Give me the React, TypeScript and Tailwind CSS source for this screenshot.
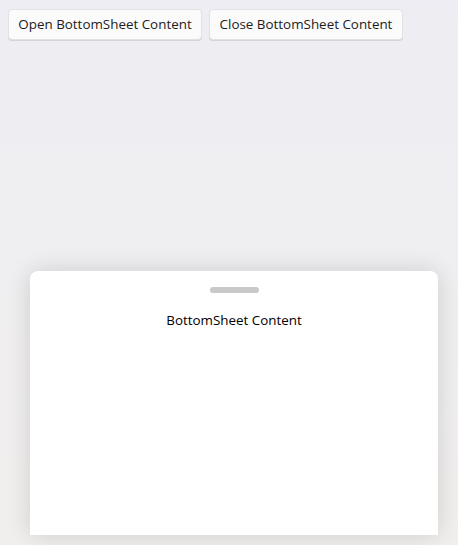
export default function App() {
  return (
    <div
      className="flex h-[545px] flex-col bg-gradient-to-b from-[#eeedf3] to-[#f1efed] text-[#1b1b1b]"
      style={{ fontFamily: '"Open Sans", "Noto Sans", sans-serif' }}
    >
      <div className="flex gap-[7px] px-2 pt-[9px]">
        <button className="h-[31px] w-[194px] rounded-[4px] border border-[#e1e1e3] bg-[#fbfbfc] text-[13.4px] shadow-[0_1px_0_#d4d4d6]">
          Open BottomSheet Content
        </button>
        <button className="h-[31px] w-[194px] rounded-[4px] border border-[#e1e1e3] bg-[#fbfbfc] text-[13.4px] shadow-[0_1px_0_#d4d4d6]">
          Close BottomSheet Content
        </button>
      </div>
      <div className="flex-1" />
      <div className="mb-[10px] ml-[30px] mr-[20px] flex h-[264px] flex-col items-center rounded-t-[8px] bg-white shadow-[0_0_24px_rgba(0,0,0,0.14)]">
        <div className="mt-4 h-[6px] w-[49px] rounded-full bg-[#c9c9c9]" />
        <div className="mt-[17px] text-[13.4px] text-black">BottomSheet Content</div>
      </div>
    </div>
  );
}
